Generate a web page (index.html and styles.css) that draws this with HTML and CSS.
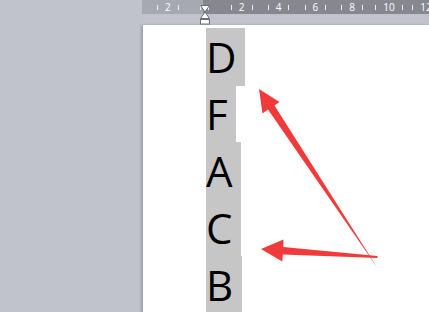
FILE: index.html
```html
<!DOCTYPE html>
<html>
<head>
    <title>Document</title>
    <link rel="stylesheet" href="styles.css">
</head>
<body>
    <div class="workspace">
        <div class="ruler">
            <div class="mark"><i></i><span>2</span><i></i></div>
            <div class="mark">
                <i></i>
                <svg class="indent" width="12" height="20" viewBox="0 0 12 20">
                    <path d="M1.5 0.5 H10.5 L6 7 L10.5 13.5 H1.5 L6 7 Z" fill="#fff" stroke="#6d6e74" stroke-width="1"/>
                    <rect x="1.5" y="14.5" width="9" height="4.5" fill="#fff" stroke="#6d6e74" stroke-width="1"/>
                </svg>
                <i></i>
            </div>
            <div class="mark"><i></i><span>2</span><i></i></div>
            <div class="mark"><i></i><span>4</span><i></i></div>
            <div class="mark"><i></i><span>6</span><i></i></div>
            <div class="mark"><i></i><span>8</span><i></i></div>
            <div class="mark"><i></i><span>10</span><i></i></div>
            <div class="mark"><i></i><span>12</span><i></i></div>
        </div>

        <div class="page">
            <div class="lines">
                <div class="line"><span class="hl">D</span></div>
                <div class="line"><span class="hl">F</span></div>
                <div class="line"><span class="hl">A</span></div>
                <div class="line"><span class="hl">C</span></div>
                <div class="line"><span class="hl">B</span></div>
            </div>
        </div>
    </div>

    <svg class="arrows" width="429" height="312" viewBox="0 0 429 312">
        <polygon points="259,89 279.5,102 274.5,105.5 377.5,268 268,109.5 262.5,113.5" fill="#f23a3a"/>
        <polygon points="261,249 283.5,239.5 283.3,247 377.5,256 377.5,258 282.8,254.5 282.3,261.5" fill="#f23a3a"/>
    </svg>
</body>
</html>
```

FILE: styles.css
```css
body {
    margin: 0;
    background: #c0c3cb;
    font-family: "Open Sans", Arial, sans-serif;
    overflow: hidden;
}
.workspace {
    display: flex;
    flex-direction: column;
    height: 312px;
}
.ruler {
    display: flex;
    align-items: center;
    height: 14px;
    margin-left: 142px;
    padding-left: 7.5px;
    background: linear-gradient(90deg, #a6a9b1 0, #a6a9b1 61px, #87888f 61px);
    color: #fff;
    font-size: 10px;
    line-height: 14px;
}
.mark {
    position: relative;
    display: flex;
    justify-content: center;
    align-items: center;
    gap: 7px;
    width: 36.86px;
    flex-shrink: 0;
}
.mark i {
    display: block;
    width: 1px;
    height: 5px;
    background: #eef0f4;
}
.mark .indent {
    position: absolute;
    left: 12.5px;
    top: 0;
}
.page {
    flex: 1;
    margin: 11px 0 0 143px;
    background: #fff;
    box-shadow: -2px 0 2px rgba(120, 122, 135, 0.45);
    padding: 3px 0 0 63px;
}
.line {
    display: flex;
    font-size: 42px;
    line-height: 58px;
    height: 57px;
}
.hl {
    display: block;
    height: 58px;
    margin-bottom: -1px;
    background: #c6c6c6;
    color: #000;
    padding-right: 8.5px;
}
.arrows {
    position: absolute;
    left: 0;
    top: 0;
}
```
